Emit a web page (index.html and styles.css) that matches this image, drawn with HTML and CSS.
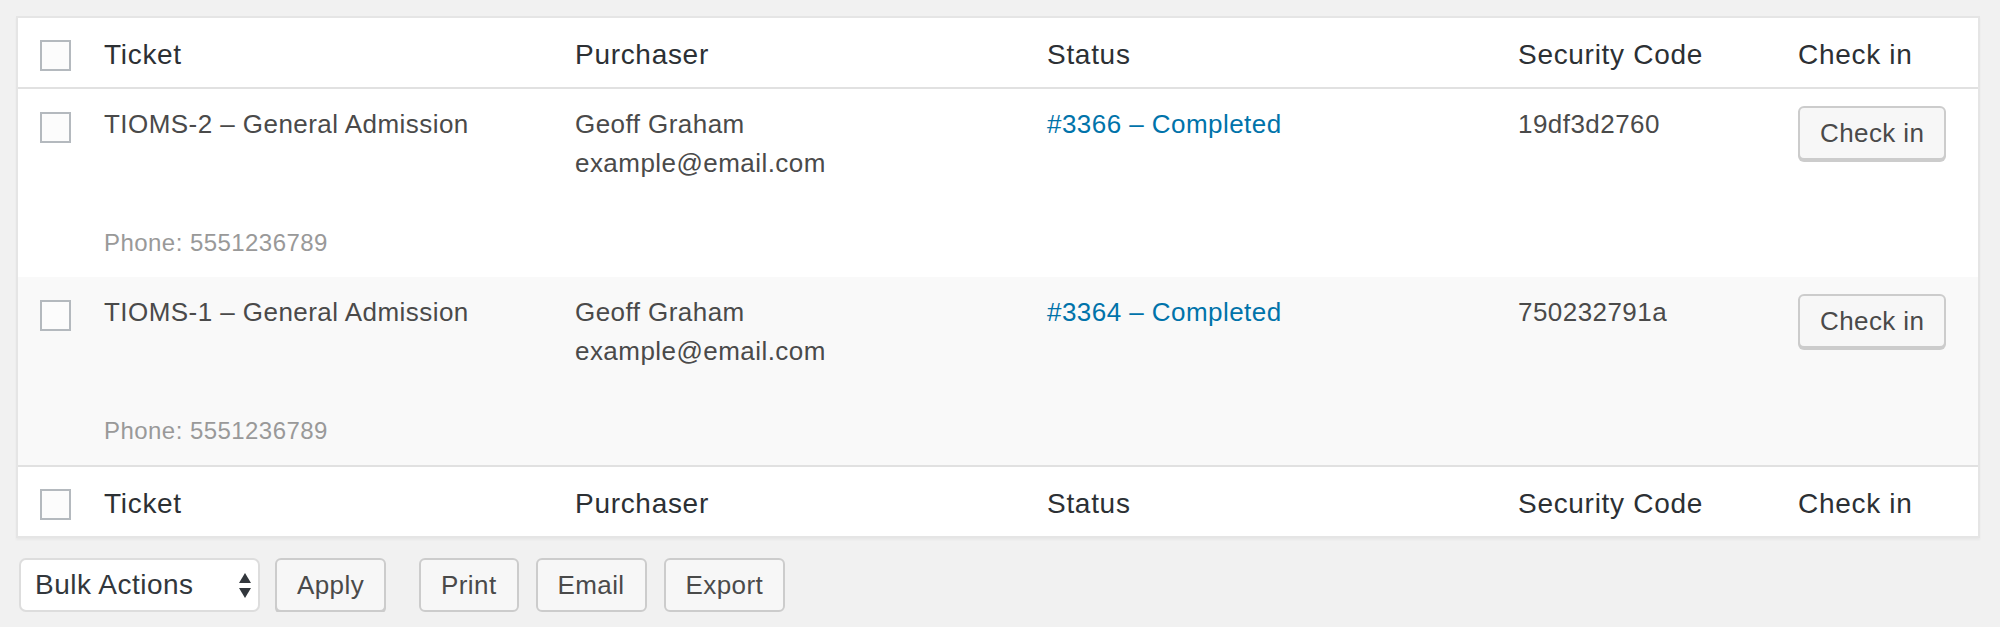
FILE: index.html
```html
<!DOCTYPE html>
<html lang="en">
<head>
<meta charset="utf-8">
<title>Attendees</title>
<link rel="stylesheet" href="styles.css">
</head>
<body>
<div class="page">
  <div class="list">
    <div class="row head">
      <div class="cell cb"><span class="box"></span></div>
      <div class="cell th">Ticket</div>
      <div class="cell th">Purchaser</div>
      <div class="cell th">Status</div>
      <div class="cell th">Security Code</div>
      <div class="cell th">Check in</div>
    </div>
    <div class="row item">
      <div class="cell cb"><span class="box"></span></div>
      <div class="cell td">
        <div class="line">TIOMS-2 – General Admission</div>
        <div class="phone">Phone: 5551236789</div>
      </div>
      <div class="cell td">
        <div class="line">Geoff Graham</div>
        <div class="line">example@email.com</div>
      </div>
      <div class="cell td"><a class="line link" href="#">#3366 – Completed</a></div>
      <div class="cell td"><div class="line">19df3d2760</div></div>
      <div class="cell td"><span class="btn shadow">Check in</span></div>
    </div>
    <div class="row item alt">
      <div class="cell cb"><span class="box"></span></div>
      <div class="cell td">
        <div class="line">TIOMS-1 – General Admission</div>
        <div class="phone">Phone: 5551236789</div>
      </div>
      <div class="cell td">
        <div class="line">Geoff Graham</div>
        <div class="line">example@email.com</div>
      </div>
      <div class="cell td"><a class="line link" href="#">#3364 – Completed</a></div>
      <div class="cell td"><div class="line">750232791a</div></div>
      <div class="cell td"><span class="btn shadow">Check in</span></div>
    </div>
    <div class="row foot">
      <div class="cell cb"><span class="box"></span></div>
      <div class="cell th">Ticket</div>
      <div class="cell th">Purchaser</div>
      <div class="cell th">Status</div>
      <div class="cell th">Security Code</div>
      <div class="cell th">Check in</div>
    </div>
  </div>
  <div class="actions">
    <div class="select">
      <span class="select-label">Bulk Actions</span>
      <svg class="arrows" width="12" height="25" viewBox="0 0 12 25" aria-hidden="true">
        <path d="M6 0 L12 10 L0 10 Z" fill="#32373c"/>
        <path d="M0 15 L12 15 L6 25 Z" fill="#32373c"/>
      </svg>
    </div>
    <span class="btn shadow apply">Apply</span>
    <span class="btn print">Print</span>
    <span class="btn next">Email</span>
    <span class="btn next">Export</span>
  </div>
</div>
</body>
</html>
```
FILE: styles.css
```css
html, body {
  margin: 0;
  padding: 0;
  background: #f1f1f1;
}
body {
  font-family: "Liberation Sans", Arial, sans-serif;
  color: #4a4a4a;
}
.page {
  padding: 16px 0 0 16px;
}
.list {
  width: 1964px;
  box-sizing: border-box;
  border: 2px solid #e5e5e5;
  background: #fff;
  box-shadow: 0 2px 2px rgba(0, 0, 0, 0.04);
}
.row {
  display: grid;
  grid-template-columns: 66px 471px 472px 471px 280px 200px;
  align-items: start;
}
.head {
  border-bottom: 2px solid #e1e1e1;
}
.foot {
  border-top: 2px solid #e1e1e1;
}
.item.alt {
  background: #f9f9f9;
}
.cell {
  box-sizing: border-box;
  min-width: 0;
}
.cb {
  padding: 22px 0 0 22px;
}
.item .cb {
  padding-top: 23px;
}
.box {
  display: block;
  width: 31px;
  height: 31px;
  box-sizing: border-box;
  border: 2px solid #b4b9be;
  background: #fcfcfc;
}
.th {
  padding: 17px 20px 13px;
  font-size: 28px;
  line-height: 39px;
  letter-spacing: 0.7px;
  color: #2c3034;
  white-space: nowrap;
}
.td {
  padding: 16px 20px;
  font-size: 26px;
  letter-spacing: 0.45px;
  white-space: nowrap;
}
.line {
  display: block;
  line-height: 39px;
}
.link {
  color: #0073aa;
  text-decoration: none;
}
.phone {
  margin-top: 81px;
  font-size: 24px;
  line-height: 36px;
  color: #999;
}
.btn {
  display: inline-block;
  box-sizing: border-box;
  height: 54px;
  padding: 0 20px;
  border: 2px solid #ccc;
  border-radius: 6px;
  background: #f7f7f7;
  color: #4a4a4a;
  font-size: 26px;
  letter-spacing: 0.4px;
  line-height: 51px;
  white-space: nowrap;
}
.td .btn {
  margin-top: 1px;
}
.btn.shadow {
  box-shadow: 0 2px 0 #ccc;
}
.actions {
  display: flex;
  align-items: flex-start;
  margin-top: 20px;
  padding-left: 3px;
}
.select {
  display: flex;
  align-items: center;
  justify-content: space-between;
  box-sizing: border-box;
  width: 241px;
  height: 54px;
  padding: 0 7px 0 14px;
  border: 2px solid #ddd;
  border-radius: 7px;
  background: #fff;
  color: #32373c;
  font-size: 28px;
  letter-spacing: 0.5px;
  line-height: 50px;
}
.arrows {
  display: block;
}
.apply {
  margin-left: 15px;
}
.print {
  margin-left: 33px;
}
.next {
  margin-left: 17px;
}
```
